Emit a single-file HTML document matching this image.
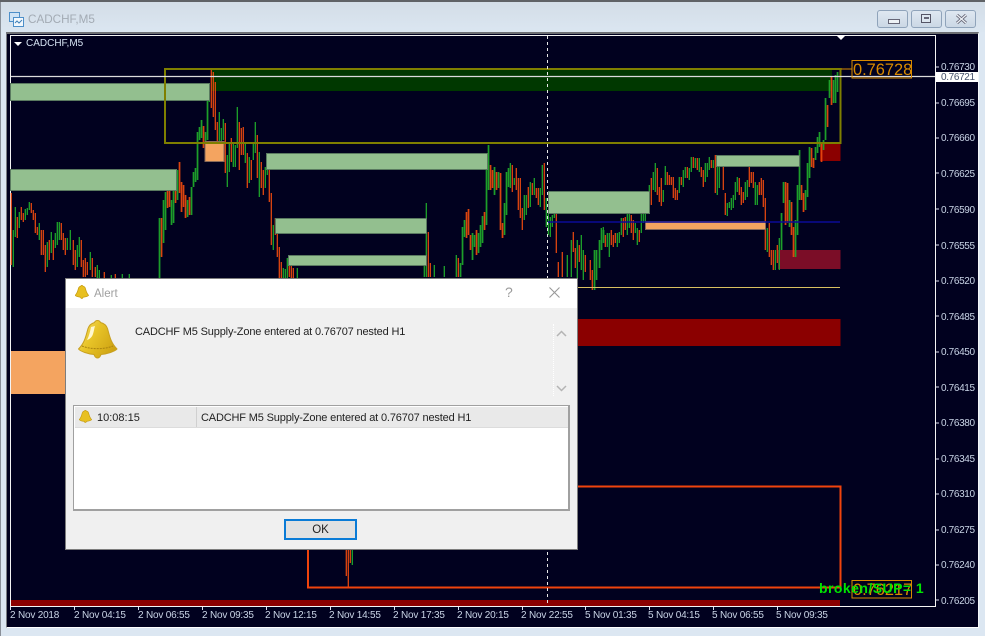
<!DOCTYPE html>
<html><head><meta charset="utf-8"><style>
html,body{margin:0;padding:0;width:985px;height:636px;overflow:hidden;background:#dce7f2;font-family:"Liberation Sans",sans-serif}
.a{position:absolute;white-space:nowrap}
.p{position:absolute;left:941px;font-size:10px;line-height:12px;color:#c9d4e6;letter-spacing:-.35px;margin-top:1px}
.t{position:absolute;top:610px;font-size:10px;line-height:12px;color:#c9d4e6;letter-spacing:-.2px;white-space:nowrap}
.b{position:absolute;top:10px;width:31px;height:18px;border:1px solid #8fa3ba;border-radius:3px;background:linear-gradient(#dfe8f1,#cbd8e5);box-sizing:border-box}
</style></head><body>
<div class="a" style="left:0;top:0;width:985px;height:2px;background:#5f6266"></div>
<div class="a" style="left:0;top:2px;width:985px;height:30px;background:linear-gradient(#d3dde7,#dbe6f1)"></div>
<div class="a" style="left:0;top:2px;width:1px;height:634px;background:#8a9099"></div>
<svg class="a" style="left:9px;top:12px" width="15" height="15" viewBox="0 0 15 15"><rect x=".5" y=".5" width="10" height="9" fill="#cfe3f5" stroke="#4d8fc9"/><rect x="4.5" y="5.5" width="10" height="9" fill="#f2f8fd" stroke="#4d8fc9"/><path d="M6 11l2-2 2 2 3-3" fill="none" stroke="#3f80b8"/></svg>
<div class="a" style="left:28px;top:12px;font-size:11.700px;line-height:15px;color:#a3abb4">CADCHF,M5</div>
<div class="b" style="left:877px"><div class="a" style="left:10px;top:8px;width:10px;height:3px;background:#eef2f6;border:1px solid #667"></div></div>
<div class="b" style="left:911px"><div class="a" style="left:9px;top:3px;width:10px;height:9px;border:1px solid #556;background:#dde6ef;box-sizing:border-box"></div><div class="a" style="left:12px;top:6px;width:5px;height:2px;background:#667"></div></div>
<div class="b" style="left:945px"><svg class="a" style="left:9px;top:2px" width="13" height="12"><path d="M2 2l9 8M11 2l-9 8" stroke="#667" stroke-width="3"/><path d="M2 2l9 8M11 2l-9 8" stroke="#eef2f6" stroke-width="1.2"/></svg></div>

<div class="a" style="left:6px;top:32px;width:973px;height:596px;background:#01011f;border:1px solid #7a7d82;border-top:2px solid #6d6f73;border-bottom:1px solid #fff;border-right:1px solid #f4f6f8;box-sizing:border-box"></div>

<svg class="a" style="left:0;top:0" width="985" height="636" viewBox="0 0 985 636">
<defs><clipPath id="thick"><rect x="159" y="60" width="50" height="220"/><rect x="460" y="140" width="50" height="140"/><rect x="780" y="70" width="60" height="190"/><rect x="594" y="230" width="10" height="62"/></clipPath></defs>
<rect x="10.500" y="35.500" width="925" height="571" fill="none" stroke="#f4f4f4"/>
<g fill="#003800"><rect x="212" y="70" width="620" height="21"/></g>
<g fill="#8b0000"><rect x="820" y="143" width="20.500" height="18"/><rect x="577" y="319" width="263.500" height="27"/><rect x="11" y="600" width="829" height="6"/></g>
<rect x="778" y="250" width="62.500" height="19" fill="#7b0d27"/>
<g id="c" transform="translate(.3 0)">
<path fill="none" stroke="#1fa82c" stroke-width="1.250" d="M13 230V267M15 207V237M19 212V228M25 209V220M27 208V215M29 202V210M39 223V240M47 242V267M51 232V253M55 233V248M57 222V245M59 222V240M67 238V250M70 230V250M77 245V267M79 237V257M90 252V270M97 265V278M99 270V278M111 275V278M122 274V278M129 274V278M159 218V278M163 200V243M165 192V230M171 200V225M173 180V223M177 170V200M187 200V217M191 187V215M193 172V187M195 168V182M197 132V180M199 127V140M201 120V138M205 132V162M207 100V140M209 90V102M219 112V148M221 128V157M223 119V140M227 155V187M229 143V172M233 142V167M235 145V167M237 107V148M245 143V163M249 157V183M253 143V160M255 122V153M259 152V197M265 167V188M267 153V175M273 225V250M283 268V278M285 269V278M287 258V278M297 268V278M424 262V277M426 203V277M434 265V277M444 266V277M456 255V277M460 263V277M462 227V265M464 220V237M472 233V260M474 235V247M478 233V253M480 225V247M482 216V243M486 170V225M488 145V190M494 167V195M498 172V188M504 203V235M506 172V215M508 168V187M510 163V188M514 178V185M524 195V220M526 195V215M530 182V207M534 178V195M540 188V207M542 165V195M546 198V227M548 213V235M550 217V237M552 215V227M554 212V218M567 255V277M571 240V277M577 240V285M581 235V270M583 250V280M594 250V290M596 250V280M599 240V268M601 228V250M603 227V243M607 233V247M609 233V257M617 233V247M619 232V243M621 218V235M627 213V235M629 213V228M635 223V233M637 228V245M641 212V233M643 210V223M645 205V222M647 193V213M649 185V203M653 172V190M655 163V192M663 190V202M665 166V185M679 177V193M683 170V187M685 167V178M689 168V180M691 157V172M695 158V168M699 158V172M705 163V182M707 163V177M709 157V170M713 160V168M717 167V195M719 157V188M721 157V167M727 203V216M729 202V208M731 198V210M733 195V208M735 182V200M737 177V192M745 182V200M747 180V197M755 182V205M757 185V205M767 228V252M775 250V270M779 238V270M781 213V250M783 182V203M789 200V227M795 220V257M797 185V235M799 150V200M805 190V210M807 163V197M809 147V178M815 147V160M817 137V153M819 132V147M823 140V150M825 98V140M829 80V98M833 80V103M835 75V103M837 72V92"/>
<path fill="none" stroke="#e8480f" stroke-width="1.250" d="M11 193V265M17 217V238M21 207V220M23 213V222M31 203V213M33 210V220M35 213V233M37 227V235M41 230V255M43 230V255M45 245V272M49 240V260M53 240V260M61 223V240M63 233V250M65 238V255M73 240V265M75 250V270M81 240V267M83 260V277M85 258V277M87 262V275M92 258V277M95 267V277M104 272V278M115 274V278M161 218V257M167 190V208M169 190V207M175 180V203M179 162V193M181 182V212M183 185V207M185 195V218M189 197V215M203 126V148M211 70V108M213 72V117M215 82V130M217 122V148M225 123V173M231 138V162M239 122V170M241 128V155M243 127V155M247 153V188M251 160V180M257 135V178M261 162V188M263 170V195M269 163V202M271 193V245M275 218V235M277 228V257M279 247V278M281 262V278M289 255V277M291 263V278M293 268V278M428 232V277M430 263V277M458 258V277M466 212V238M468 209V235M470 235V250M476 230V255M484 212V230M490 165V190M492 170V188M496 172V190M500 173V230M502 223V238M512 165V192M516 168V190M518 178V210M520 178V218M522 208V230M528 187V208M532 183V195M536 188V198M538 188V205M544 163V210M556 197V253M558 262V277M562 252V277M573 232V252M575 248V268M579 245V262M585 255V272M590 260V280M592 270V290M605 235V247M611 230V245M613 235V247M615 233V243M623 218V237M625 217V230M631 215V233M633 220V240M639 230V242M651 178V205M657 168V195M659 187V202M661 178V206M667 172V185M669 175V185M671 177V185M673 177V198M675 188V200M677 190V200M681 177V185M687 167V178M693 157V168M697 158V170M701 167V177M703 170V187M711 160V168M715 155V193M723 157V190M725 193V215M739 178V195M741 187V205M743 192V203M749 160V187M751 172V183M753 172V188M759 182V195M761 178V195M763 180V207M765 198V250M769 223V257M771 250V265M773 250V270M777 245V263M785 182V225M787 183V223M791 202V235M793 227V257M801 185V200M803 193V212M811 148V167M813 158V168M821 142V162M827 105V127M831 77V105M346 549V576M348 549V588M350 549V563"/>
<path fill="none" stroke="#1fa82c" stroke-width="1.250" d="M352 549V565"/>
</g>
<use href="#c" x="1" clip-path="url(#thick)" opacity=".4"/>
<g fill="#93bf8f" stroke="#5a7a60" stroke-width="1">
<rect x="10.500" y="83.500" width="199" height="17"/>
<rect x="10.500" y="169.500" width="166" height="21"/>
<rect x="266.500" y="153.500" width="221" height="16"/>
<rect x="275.500" y="218.500" width="151" height="15"/>
<rect x="288.500" y="255.500" width="138" height="10"/>
<rect x="548.500" y="191.500" width="101" height="22"/>
<rect x="716.500" y="155.500" width="83" height="11"/>
</g>
<g fill="#f4a460" stroke="#8a6a58" stroke-width="1">
<rect x="205" y="141.500" width="19" height="20"/>
<rect x="645.500" y="221.500" width="120" height="8"/>
<rect x="11" y="351" width="54" height="43" stroke="none"/>
</g>
<path d="M548 222H840" stroke="#0a0a96" stroke-width="1.500"/>
<path d="M565 287.500H840" stroke="#d8c060" stroke-width="1"/>
<rect x="165" y="69" width="675.500" height="74" fill="none" stroke="#7f7f00" stroke-width="2"/>
<path d="M308 549V587.500H840.500V486.500H577" fill="none" stroke="#f0430c" stroke-width="2"/>
<path d="M11 76.500H935" stroke="#dcdcdc" stroke-width="1.200"/>
<path d="M547.500 36V606" stroke="#e8e8e8" stroke-dasharray="3 3"/>
<path d="M836 35h10l-5 5z" fill="#fff"/>
<path d="M841 69H852" stroke="#d98a00"/>
<rect x="852" y="60.500" width="59.500" height="17.500" fill="none" stroke="#d98a00"/>
<rect x="852" y="580.500" width="59.500" height="17.500" fill="none" stroke="#d98a00"/>
<path d="M14 42h8l-4 4z" fill="#fff"/>
<path d="M936 67H939M936 103H939M936 138H939M936 173H939M936 209H939M936 245H939M936 281H939M936 316H939M936 352H939M936 387H939M936 423H939M936 459H939M936 494H939M936 530H939M936 565H939M936 600H939" stroke="#dde"/>
<path d="M10.500 607V610M74.500 607V610M138.500 607V610M202.500 607V610M266.500 607V610M330.500 607V610M394.500 607V610M458.500 607V610M522.500 607V610M585.500 607V610M649.500 607V610M713.500 607V610M777.500 607V610" stroke="#dde"/>
</svg>

<div class="a" style="left:26px;top:38px;font-size:10px;line-height:12px;color:#d5e2f2">CADCHF,M5</div>
<div class="a" style="left:936px;top:72px;width:42px;height:10px;background:#fff"></div>
<div class="p" style="top:61px">0.76730</div>
<div class="p" style="top:71px;color:#44506a">0.76721</div>
<div class="p" style="top:97px">0.76695</div>
<div class="p" style="top:132px">0.76660</div>
<div class="p" style="top:168px">0.76625</div>
<div class="p" style="top:204px">0.76590</div>
<div class="p" style="top:240px">0.76555</div>
<div class="p" style="top:275px">0.76520</div>
<div class="p" style="top:311px">0.76485</div>
<div class="p" style="top:346px">0.76450</div>
<div class="p" style="top:382px">0.76415</div>
<div class="p" style="top:417px">0.76380</div>
<div class="p" style="top:453px">0.76345</div>
<div class="p" style="top:488px">0.76310</div>
<div class="p" style="top:524px">0.76275</div>
<div class="p" style="top:559px">0.76240</div>
<div class="p" style="top:595px">0.76205</div>
<div class="t" style="left:10px">2 Nov 2018</div>
<div class="t" style="left:74px">2 Nov 04:15</div>
<div class="t" style="left:138px">2 Nov 06:55</div>
<div class="t" style="left:202px">2 Nov 09:35</div>
<div class="t" style="left:265px">2 Nov 12:15</div>
<div class="t" style="left:329px">2 Nov 14:55</div>
<div class="t" style="left:393px">2 Nov 17:35</div>
<div class="t" style="left:457px">2 Nov 20:15</div>
<div class="t" style="left:521px">2 Nov 22:55</div>
<div class="t" style="left:585px">5 Nov 01:35</div>
<div class="t" style="left:648px">5 Nov 04:15</div>
<div class="t" style="left:712px">5 Nov 06:55</div>
<div class="t" style="left:776px">5 Nov 09:35</div>
<div class="a" style="left:853px;top:60px;font-size:16.400px;line-height:20px;color:#d98a00">0.76728</div>
<div class="a" style="left:853px;top:580px;font-size:16.400px;line-height:20px;color:#d98a00">0.76217</div>
<div class="a" style="left:819px;top:580px;font-size:14px;line-height:16px;font-weight:bold;color:#00e400;letter-spacing:.45px">broken/SUP= 1</div>

<div class="a" style="left:65px;top:278px;width:513px;height:272px;background:#f0f0f0;border:1px solid #7d7d7d;box-sizing:border-box">
<div class="a" style="left:0;top:0;width:511px;height:29px;background:#fff"></div>
</div>
<svg class="a" style="left:75px;top:285px" width="14" height="14" viewBox="0 0 40 39"><path d="M19.500 .5c1.500 0 2.500.7 3 2 4 1 6 3 7 6 2 7 3 14 9.500 20.500-2 2.500-10 5-16 5.500-.5 2-2 3.500-3.500 3.500s-3-1.500-3.500-3.500C10 34 2.500 31.500.5 29 7 22.500 8 15.500 10 8.500c1-3 3-5 6.500-6 .5-1.300 1.500-2 3-2z" fill="#e8c020" stroke="#c49a10" stroke-width="2"/></svg>
<div class="a" style="left:94px;top:287px;font-size:11.500px;line-height:14px;color:#a0a0a0">Alert</div>
<div class="a" style="left:505px;top:284px;font-size:14px;line-height:16px;color:#9b9b9b">?</div>
<svg class="a" style="left:548px;top:286px" width="13" height="13"><path d="M1.500 1.500l10 10M11.500 1.500l-10 10" stroke="#999" stroke-width="1.100"/></svg>
<svg class="a" style="left:78px;top:320px" width="40" height="39" viewBox="0 0 40 39"><defs><linearGradient id="g" x1="0" x2="1" y1="0" y2=".6"><stop offset="0" stop-color="#f6e070"/><stop offset=".45" stop-color="#e8c428"/><stop offset="1" stop-color="#cfa414"/></linearGradient></defs><path d="M19.500 .5c1.500 0 2.500.7 3 2 4 1 6 3 7 6 2 7 3 14 9.500 20.500-2 2.500-10 5-16 5.500-.5 2-2 3.500-3.500 3.500s-3-1.500-3.500-3.500C10 34 2.500 31.500.5 29 7 22.500 8 15.500 10 8.500c1-3 3-5 6.500-6 .5-1.300 1.500-2 3-2z" fill="url(#g)" stroke="#c8a020"/><path d="M4 26c8 3.500 23 3.500 31 0" fill="none" stroke="#a98210" stroke-dasharray="2 1"/><path d="M13 7c-1 5-2 9-4 13 3-1 5-3 6-6s1-5 2-8z" fill="#fff8d0"/></svg>
<div class="a" style="left:135px;top:325px;font-size:11px;line-height:14px;color:#222;letter-spacing:-.16px">CADCHF M5 Supply-Zone entered at 0.76707 nested H1</div>
<div class="a" style="left:553px;top:324px;height:72px;border-left:1px dotted #fff"></div>
<svg class="a" style="left:556px;top:329px" width="11" height="65"><path d="M1 7l4.500-4.500L10 7M1 57l4.500 4.500L10 57" fill="none" stroke="#b4b4b4" stroke-width="1.500"/></svg>
<div class="a" style="left:73px;top:405px;width:497px;height:106px;background:#fff;border:1px solid #a0a0a0;border-width:1px 2px 2px 1px;box-sizing:border-box">
<div class="a" style="left:1px;top:1px;width:493px;height:20px;background:#e9e9e9;border-bottom:1px solid #dcdcdc"></div>
<div class="a" style="left:122px;top:1px;width:1px;height:20px;background:#d0d0d0"></div>
</div>
<svg class="a" style="left:79px;top:410px" width="13" height="13" viewBox="0 0 40 39"><path d="M19.500 .5c1.500 0 2.500.7 3 2 4 1 6 3 7 6 2 7 3 14 9.500 20.500-2 2.500-10 5-16 5.500-.5 2-2 3.500-3.500 3.500s-3-1.500-3.500-3.500C10 34 2.500 31.500.5 29 7 22.500 8 15.500 10 8.500c1-3 3-5 6.500-6 .5-1.300 1.500-2 3-2z" fill="#e8c020" stroke="#c49a10" stroke-width="2"/></svg>
<div class="a" style="left:97px;top:411px;font-size:11px;line-height:14px;color:#222">10:08:15</div>
<div class="a" style="left:201px;top:411px;font-size:11px;line-height:14px;color:#222;letter-spacing:-.16px">CADCHF M5 Supply-Zone entered at 0.76707 nested H1</div>
<div class="a" style="left:284px;top:519px;width:73px;height:21px;background:#e1e1e1;border:2px solid #0a7bd6;box-sizing:border-box;text-align:center;font-size:11.500px;line-height:18px;color:#222">OK</div>
</body></html>
